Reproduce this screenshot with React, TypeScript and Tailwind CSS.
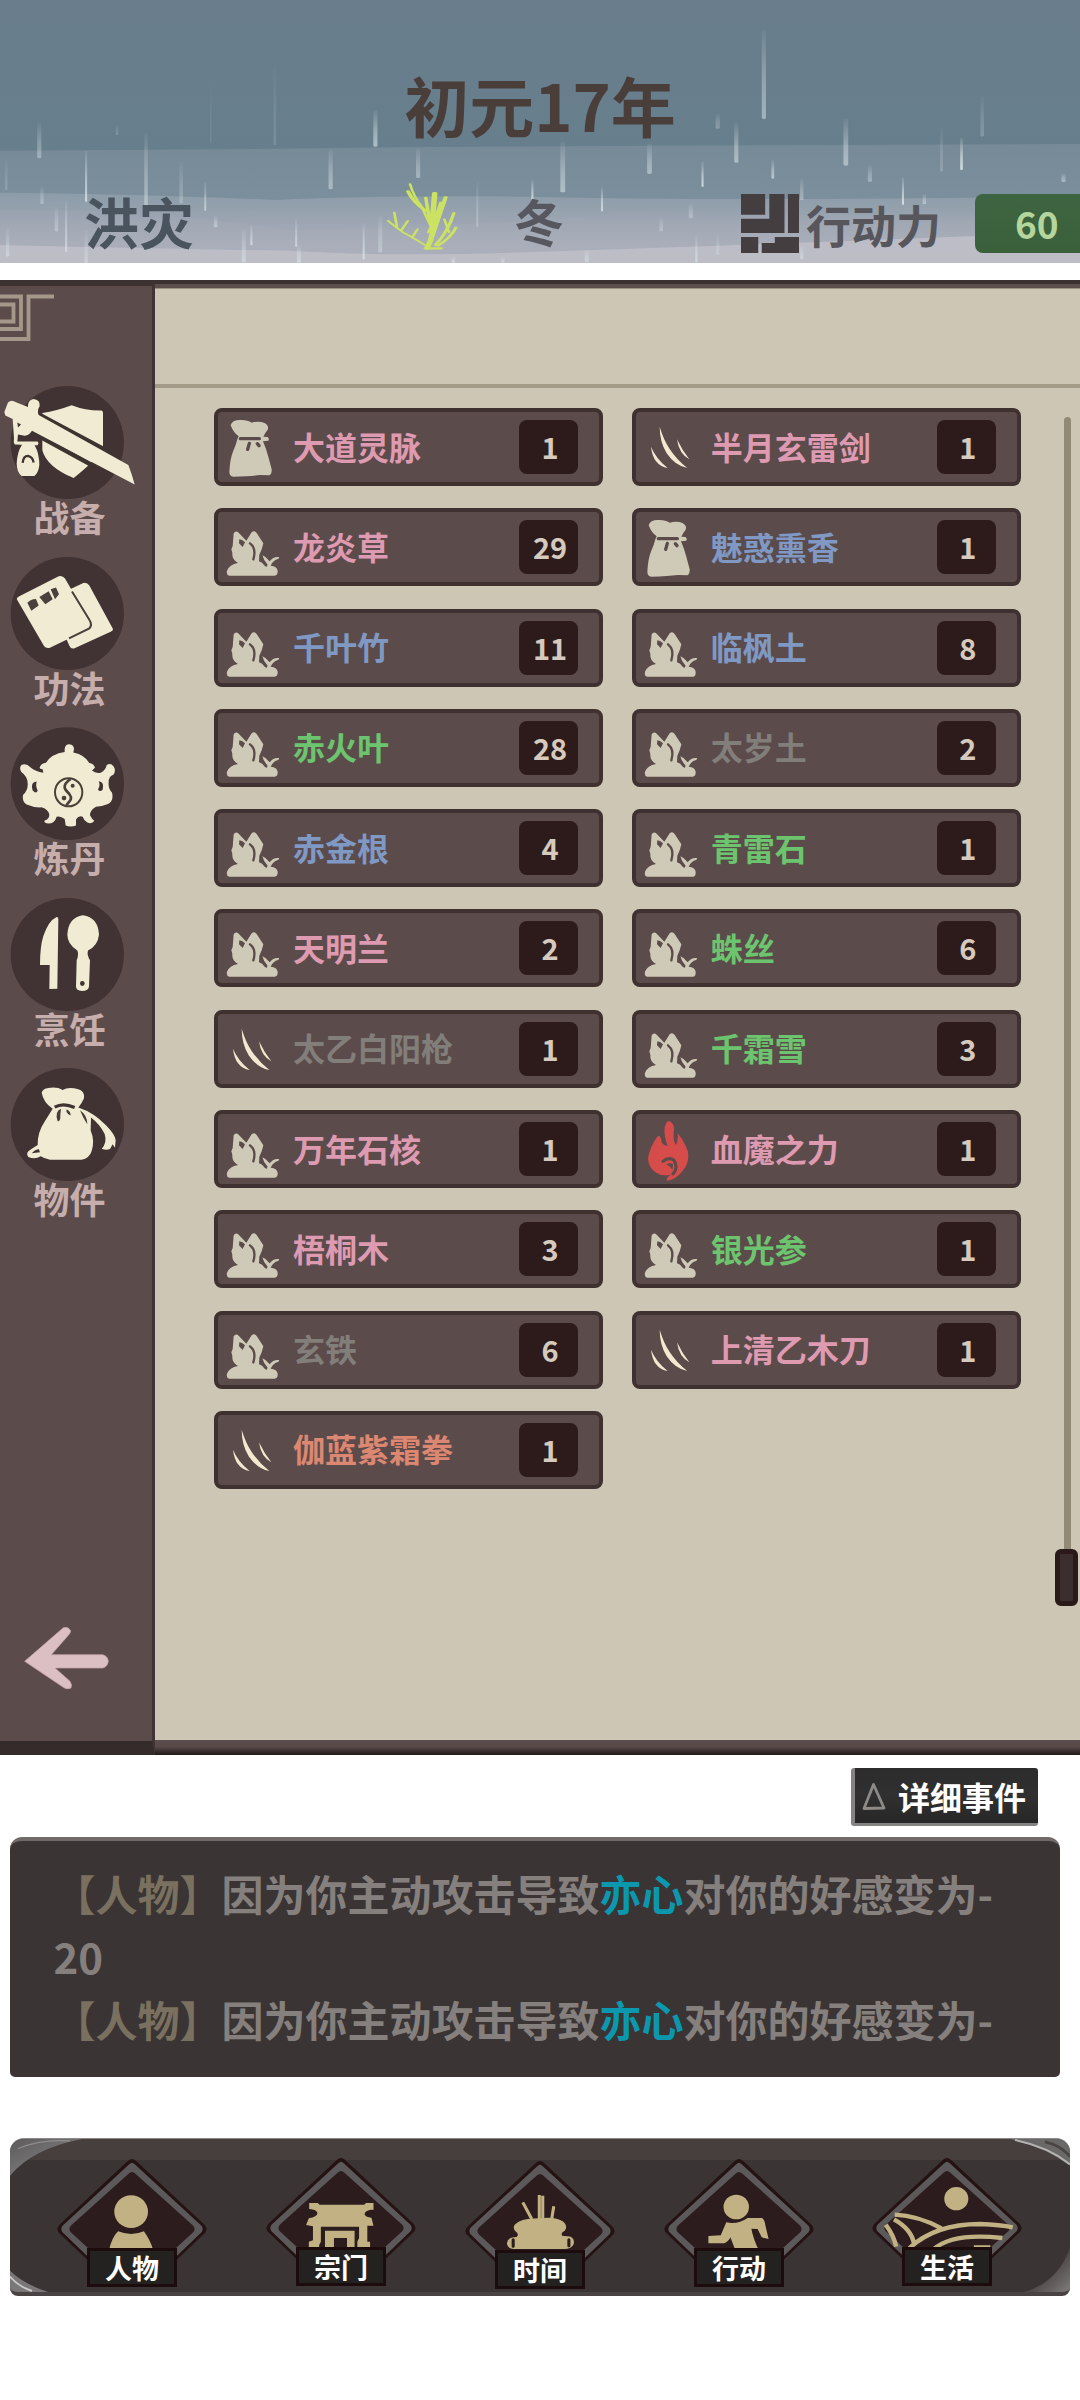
import React from "react";

type IconKind = "bag" | "herb" | "slash" | "flame";
type Item = { name: string; count: number; icon: IconKind; color: string };

const PINK = "text-[#de9ab0]";
const BLUE = "text-[#7f99c4]";
const GREEN = "text-[#6cc56e]";
const GRAY = "text-[#827e7a]";
const ORANGE = "text-[#dc8771]";

const items: Item[] = [
  { name: "大道灵脉", count: 1, icon: "bag", color: PINK },
  { name: "半月玄雷剑", count: 1, icon: "slash", color: PINK },
  { name: "龙炎草", count: 29, icon: "herb", color: PINK },
  { name: "魅惑熏香", count: 1, icon: "bag", color: BLUE },
  { name: "千叶竹", count: 11, icon: "herb", color: BLUE },
  { name: "临枫土", count: 8, icon: "herb", color: BLUE },
  { name: "赤火叶", count: 28, icon: "herb", color: GREEN },
  { name: "太岁土", count: 2, icon: "herb", color: GRAY },
  { name: "赤金根", count: 4, icon: "herb", color: BLUE },
  { name: "青雷石", count: 1, icon: "herb", color: GREEN },
  { name: "天明兰", count: 2, icon: "herb", color: PINK },
  { name: "蛛丝", count: 6, icon: "herb", color: GREEN },
  { name: "太乙白阳枪", count: 1, icon: "slash", color: GRAY },
  { name: "千霜雪", count: 3, icon: "herb", color: GREEN },
  { name: "万年石核", count: 1, icon: "herb", color: PINK },
  { name: "血魔之力", count: 1, icon: "flame", color: PINK },
  { name: "梧桐木", count: 3, icon: "herb", color: PINK },
  { name: "银光参", count: 1, icon: "herb", color: GREEN },
  { name: "玄铁", count: 6, icon: "herb", color: GRAY },
  { name: "上清乙木刀", count: 1, icon: "slash", color: PINK },
  { name: "伽蓝紫霜拳", count: 1, icon: "slash", color: ORANGE },
];

/* Rain streaks: x, top, bottom, width, opacity */
const rain: [number, number, number, number, number][] = [
  [57, 368, 475, 6, 0.4], [125, 452, 605, 3, 0.8], [125, 690, 789, 5, 0.4], [212, 400, 620, 5, 0.5],
  [263, 482, 610, 5, 0.3], [170, 375, 405, 4, 0.2], [298, 545, 632, 3, 0.6], [399, 200, 435, 4, 0.15],
  [545, 330, 440, 6, 0.6], [480, 448, 568, 6, 0.5], [607, 445, 534, 6, 0.45], [817, 425, 577, 7, 0.55],
  [943, 430, 522, 7, 0.5], [773, 540, 598, 3, 0.8], [693, 545, 680, 3, 0.35], [874, 562, 634, 3, 0.8],
  [1020, 484, 560, 3, 0.85], [1042, 340, 386, 6, 0.3], [1069, 368, 488, 6, 0.55], [1109, 90, 357, 6, 0.5],
  [1122, 480, 536, 4, 0.65], [1164, 535, 600, 5, 0.4], [1228, 355, 497, 7, 0.55], [1263, 495, 546, 6, 0.4],
  [1311, 532, 614, 3, 0.85], [1342, 582, 612, 5, 0.5], [1367, 380, 515, 4, 0.25], [1396, 414, 510, 4, 0.85],
  [1426, 290, 410, 5, 0.25], [1544, 520, 546, 6, 0.5], [61, 560, 612, 5, 0.35], [82, 620, 695, 5, 0.4],
  [96, 600, 755, 3, 0.65], [11, 685, 770, 5, 0.45], [9, 480, 570, 4, 0.2], [313, 648, 682, 5, 0.5],
  [354, 685, 787, 6, 0.5], [365, 676, 735, 3, 0.75], [430, 655, 740, 3, 0.65], [434, 735, 788, 6, 0.55],
  [528, 670, 778, 3, 0.75], [552, 645, 757, 6, 0.4], [658, 770, 788, 5, 0.6], [730, 772, 788, 5, 0.5],
  [852, 748, 786, 6, 0.5], [960, 655, 694, 5, 0.4], [1003, 610, 655, 6, 0.35], [1011, 704, 787, 3, 0.65],
  [1042, 705, 765, 4, 0.35], [1164, 735, 778, 5, 0.5], [306, 250, 430, 2, 0.12],
];

function Sky() {
  return (
    <svg className="absolute inset-0 h-full w-full" viewBox="0 0 1568 789" preserveAspectRatio="none" aria-hidden>
      <defs>
        <linearGradient id="top" x1="0" y1="0" x2="0" y2="1">
          <stop offset="0" stopColor="#697d8c" />
          <stop offset="1" stopColor="#677f8c" />
        </linearGradient>
        <linearGradient id="mid" x1="0" y1="0" x2="0" y2="1">
          <stop offset="0" stopColor="#778a98" />
          <stop offset="1" stopColor="#8194a0" />
        </linearGradient>
        <linearGradient id="low" x1="0" y1="0" x2="0" y2="1">
          <stop offset="0" stopColor="#8b9ca8" />
          <stop offset="0.4" stopColor="#9ba5b1" />
          <stop offset="1" stopColor="#b3b5c0" />
        </linearGradient>
        <linearGradient id="haze" x1="0" y1="0" x2="0" y2="1">
          <stop offset="0" stopColor="#a9adb9" stopOpacity="0.1" />
          <stop offset="1" stopColor="#a9adb9" stopOpacity="0.7" />
        </linearGradient>
        <linearGradient id="drop" x1="0" y1="0" x2="0" y2="1">
          <stop offset="0" stopColor="#d6e2e6" stopOpacity="0.1" />
          <stop offset="0.55" stopColor="#d6e2e6" stopOpacity="0.75" />
          <stop offset="1" stopColor="#dde8ea" />
        </linearGradient>
      </defs>
      <rect width="1568" height="460" fill="url(#top)" />
      <path d="M0 452 Q250 450 500 444 T1568 432 V789 H0Z" fill="url(#mid)" />
      <path d="M0 578 Q180 580 400 600 Q560 585 760 590 Q1100 605 1568 588 V789 H0Z" fill="url(#low)" />
      <path d="M0 630 Q220 625 420 690 Q700 680 900 640 Q1200 650 1568 640 V789 H0Z" fill="url(#haze)" />
      <path d="M0 735 Q200 745 420 752 Q560 770 740 758 Q1100 735 1568 695 V789 H0Z" fill="#bfc0c8" opacity="0.85" />
      {rain.map(([x, a, b, w, o]) => (
        <rect key={`${x}-${a}`} x={x - w / 2} y={a} width={w} height={b - a} rx={w / 2} fill="url(#drop)" opacity={o} />
      ))}
    </svg>
  );
}

function Twig() {
  return (
    <svg className="h-[68px] w-[72px]" viewBox="560 538 105 205" preserveAspectRatio="none" fill="none" stroke="#cce262" strokeLinecap="round" aria-hidden>
      <path d="M620 738 Q632 690 628 640 Q630 600 631 572" strokeWidth="8" />
      <path d="M595 544 Q600 580 612 612 Q620 650 630 690" strokeWidth="4" />
      <path d="M592 566 Q600 600 618 625" strokeWidth="6" />
      <path d="M647 584 Q638 640 628 700" strokeWidth="6" />
      <path d="M640 600 Q632 650 622 690 M618 585 Q622 640 626 670" strokeWidth="5" />
      <path d="M659 632 Q650 690 632 728 M662 675 Q655 705 636 730" strokeWidth="5" />
      <path d="M572 630 L576 672 M563 655 Q575 675 585 690 Q600 705 622 735" strokeWidth="4" />
      <path d="M592 655 L582 684 M606 680 L598 706 M645 650 L652 690" strokeWidth="4" />
      <path d="M618 738 H640" strokeWidth="7" />
    </svg>
  );
}

function EnergyIcon() {
  return (
    <svg className="h-[59px] w-[58px] shrink-0" viewBox="1076 582 84 177" preserveAspectRatio="none" fill="#453e41" aria-hidden>
      <path d="M1076 582h35v62h-35zM1117 582h22v117h-63v-43h41zM1144 582h16v117h-16zM1076 711h25v48h-25zM1106 759v-30h19v-18h35v48z" />
    </svg>
  );
}

const CREAM = "#f0ebd2";
const DARK = "#413233";

function SideIcon({ kind }: { kind: string }) {
  const early = kind === "gear" || kind === "books";
  const views: Record<string, string> = {
    gear: "0 347 459 340",
    books: "0 858 459 340",
    alchemy: "0 77 459 329",
    cooking: "0 574 459 329",
    goods: "0 1068 459 329",
  };
  const cy: Record<string, number> = { gear: 517, books: 1028, alchemy: 242, cooking: 738.5, goods: 1232.5 };
  return (
    <svg className="block h-[113px] w-[153px]" viewBox={views[kind]} preserveAspectRatio="none" aria-hidden>
      <ellipse cx="202" cy={cy[kind]} rx="170" ry={early ? 170 : 164.5} fill={DARK} />
      {kind === "gear" && (
        <g fill={CREAM}>
          <path d="M127 428 Q170 422 215 405 Q258 422 305 421 Q310 424 309 430 V532 Q300 560 221 624 Q140 590 127 540Z" />
          <path d="M122 436 L330 547 M92 484 L285 590" stroke="#3d3330" strokeWidth="14" />
          <path d="M13 425 L24 397 Q34 386 48 396 L84 410 Q82 390 100 386 Q122 389 119 408 Q110 420 116 434 L385 585 Q395 610 404 643 L96 482 Q84 500 70 496 L54 493 L52 514 H113 Q118 519 113 525 H104 Q118 550 118 585 Q115 610 103 618 H65 Q50 605 50 580 Q52 545 66 524 L45 523 Q40 520 42 505 L38 446 L16 436Z" />
          <path d="M52 457 L63 463 L54 472Z" fill={DARK} />
          <path d="M68 578 Q70 557 84 557 Q98 560 101 577" fill="none" stroke={DARK} strokeWidth="7" />
        </g>
      )}
      {kind === "books" && (
        <g fill={CREAM}>
          <path d="M210 955 L250 936 Q262 934 268 944 L339 1075 Q340 1080 332 1083 L222 1133 Q212 1135 208 1125 L195 1095Z" />
          <path d="M50 984 Q52 978 58 976 L176 916 Q188 913 195 923 L271 1054 Q276 1068 266 1075 L150 1131 Q138 1134 132 1126Z" />
          <path d="M216 962 L268 1047 Q278 1062 268 1073 L207 1103" fill="none" stroke="#49403b" strokeWidth="6" />
          <path d="M82 996 Q92 984 108 984 L116 1004 L94 1020Z M118 978 L146 961 L158 985 L136 1000Z M152 955 L168 950 L177 970 L165 985Z" fill="#49403b" />
        </g>
      )}
      {kind === "alchemy" && (
        <g fill={CREAM}>
          <path d="M194 140 Q196 127 208 127 Q222 129 222 141 L220 151 Q255 158 268 182 Q282 184 285 196 L276 204 Q288 214 302 210 Q318 203 320 188 Q332 180 341 192 Q349 204 340 216 Q326 220 326 238 Q324 256 336 268 Q342 292 324 301 Q305 308 288 309 Q270 318 270 334 Q276 346 283 350 Q276 361 262 355 Q252 350 248 338 Q236 334 228 346 L228 364 Q212 370 197 364 L194 345 Q182 335 170 338 Q164 358 145 358 Q132 357 133 350 Q148 346 148 332 Q144 316 124 311 Q100 312 80 303 Q66 294 69 275 Q84 262 83 243 Q84 222 64 208 Q56 196 65 187 Q80 182 91 194 Q106 206 130 210 L128 200 Q118 200 119 194 Q124 182 138 181 Q155 155 194 150Z" />
          <path d="M110 236 Q90 238 98 262 Q110 273 113 262 Q106 250 110 236ZM296 235 Q314 237 308 260 Q298 268 294 258 Q302 247 296 235Z" fill={DARK} />
          <circle cx="206" cy="267" r="41" fill="none" stroke="#4a4039" strokeWidth="6" />
          <path d="M212 228 C180 250 198 262 208 272 C222 290 202 296 200 305" fill="none" stroke="#4a4039" strokeWidth="8" />
          <circle cx="218" cy="248" r="6" fill="#4a4039" />
          <circle cx="192" cy="284" r="7" fill="#4a4039" />
        </g>
      )}
      {kind === "cooking" && (
        <g fill={CREAM}>
          <path d="M170 629 Q175 629 175 636 L172 838 L148 839 L149 769 H120 Q120 715 130 685 Q145 640 170 629Z" />
          <path d="M249 624 Q294 630 297 680 Q294 712 264 727 Q260 740 270 755 L267 832 Q266 845 246 845 Q228 844 228 832 L230 755 Q237 740 232 727 Q202 708 202 680 Q205 630 249 624Z" />
          <circle cx="247" cy="823" r="7" fill={DARK} />
        </g>
      )}
      {kind === "goods" && (
        <g fill={CREAM}>
          <path d="M125 1140 Q128 1128 145 1126 Q172 1122 188 1132 Q205 1122 235 1130 Q255 1136 252 1156 Q245 1172 235 1183 Q282 1198 318 1235 Q345 1262 347 1278 L345 1300 L338 1290 L330 1304 Q318 1308 305 1303 Q322 1285 314 1260 Q300 1232 273 1212 L272 1250 Q285 1280 275 1310 Q268 1332 245 1335 H150 Q135 1333 122 1325 Q105 1335 85 1327 Q75 1315 92 1305 L113 1292 Q112 1255 135 1222 L158 1187 Q130 1168 125 1140Z" />
          <path d="M164 1182 Q190 1168 224 1183" fill="none" stroke={DARK} strokeWidth="9" />
          <path d="M183 1187 Q163 1195 173 1223 Q182 1225 181 1205Z M200 1188 Q196 1200 212 1206 Q212 1194 200 1188Z M240 1191 Q262 1205 262 1232 Q250 1215 240 1191Z" fill="#4a3d39" />
          <path d="M95 1316 Q105 1305 116 1304 L120 1313Z" fill={DARK} />
        </g>
      )}
    </svg>
  );
}

function ItemIcon({ kind }: { kind: IconKind }) {
  const hole = "#5c4b4b";
  const views: Record<IconKind, string> = {
    bag: "54 66 228 210",
    herb: "54 366 228 210",
    slash: "47 66 228 210",
    flame: "47 102 228 210",
  };
  return (
    <svg className="h-[70px] w-[76px] shrink-0" viewBox={views[kind]} aria-hidden>
      {kind === "bag" && (
        <g>
          <path fill="#cfcab7" d="M92 106 Q96 90 120 90 Q142 89 155 98 Q175 92 192 98 Q208 106 203 119 Q194 130 190 140 L203 141 Q209 147 205 152 L189 154 Q198 175 205 200 L215 238 Q216 252 208 256 L180 255 Q150 259 100 260 Q88 258 88 245 Q90 205 100 182 Q108 165 112 148 L116 139 Q100 128 92 106Z" />
          <path d="M121 146 H178" stroke={hole} strokeWidth="10" strokeLinecap="round" />
          <path d="M148 160 L143 178 M172 161 L177 167" stroke={hole} strokeWidth="10" strokeLinecap="round" />
        </g>
      )}
      {kind === "herb" && (
        <g>
          <path fill="#cfcab7" d="M101 430 Q107 420 116 428 L139 452 L155 427 Q163 419 170 429 L190 460 Q186 480 178 494 L177 514 Q190 518 196 528 L203 524 Q190 510 187 496 Q199 500 209 514 Q220 499 236 501 Q240 504 234 507 Q220 510 212 527 Q231 528 233 542 Q234 557 224 557 H88 Q78 555 81 542 Q88 524 114 519 Q95 508 97 488 L94 478 L98 468Z" />
          <path fill={hole} d="M118 448 Q126 448 135 457 L128 471 L117 460Z" />
          <path d="M150 460 Q170 475 160 508" fill="none" stroke={hole} strokeWidth="7" strokeLinecap="round" />
          <path d="M184 501 Q187 518 199 527" fill="none" stroke={hole} strokeWidth="6" strokeLinecap="round" />
        </g>
      )}
      {kind === "slash" && (
        <path fill="#f3e9d0" d="M118 110 Q130 150 148 177 Q170 210 201 234 Q165 228 139 190 Q118 155 118 110ZM92 170 Q106 205 142 234 Q98 226 92 170ZM170 148 Q186 182 207 208 Q176 192 170 148Z" />
      )}
      {kind === "flame" && (
        <g>
          <path fill="#d54c4a" d="M145 123 Q160 126 161 147 Q157 180 166 195 Q174 185 172 160 Q192 185 203 215 Q208 250 187 272 Q168 298 140 302 Q135 295 152 284 Q125 290 108 278 Q85 265 83 236 Q88 200 113 167 Q121 168 122 178 Q124 196 142 198 Q130 168 133 142 Q138 124 145 123Z" />
          <path d="M128 244 Q145 230 160 240 Q176 262 158 282" fill="none" stroke={hole} strokeWidth="9" strokeLinecap="round" />
          <path d="M158 252 Q146 246 137 254 Q150 256 156 270Z" fill={hole} />
        </g>
      )}
    </svg>
  );
}

const KHAKI = "#c2b283";

const navArt: Record<string, React.ReactNode> = {
  人物: (
    <g transform="translate(-383.5 -115)">
      <circle cx="381" cy="273" r="49" />
      <path d="M316 390 Q325 350 343 332 Q382 348 418 332 Q435 355 446 390Z" />
    </g>
  ),
  宗门: (
    <g transform="translate(-990.5 -112)">
      <path d="M898 247h25l5 5h130l5-5h22v20h-8q-18 3-18 14 4 10 20 10l6 24h-18v48h8v30h-38v-30l6-10v-35H932v45l-5 10v20h-30v-30l12-4v-42l-20-4 8-20q24-4 25-15-2-10-18-12l-6-1z" />
      <path d="M940 390v-62h94v62" fill="none" stroke="#2b1c1d" strokeWidth="8" />
      <path d="M944 390v-60h86v60h-22v-38h-38v38z" />
    </g>
  ),
  时间: (
    <g transform="translate(0 -126)">
      <path d="M-50 250 L-24 300 M-2 228 V300 M8 230 V300 M40 262 L34 300" stroke={KHAKI} strokeWidth="9" fill="none" />
      <path d="M-62 308 Q-40 298 0 298 Q45 292 68 308 Q82 320 72 335 Q60 340 64 350 L78 352 Q102 352 98 375 Q92 390 70 390 H-70 Q-96 390 -96 372 Q-94 354 -68 354 Q-60 345 -70 338 Q-86 322 -62 308Z" />
      <path d="M-78 362v20M84 362v18" stroke="#2b1c1d" strokeWidth="9" strokeLinecap="round" />
    </g>
  ),
  行动: (
    <g transform="translate(-578 -115)">
      <circle cx="570" cy="259" r="37" />
      <path d="M541 305 Q575 312 603 292 H645 Q652 296 655 315 L664 355 L644 350 L632 325 L614 324 Q618 350 636 390 H568 L553 350 Q548 362 535 368 L489 368 V346 L525 344Z" />
    </g>
  ),
  生活: (
    <g transform="translate(-1184 -112)">
      <circle cx="1211" cy="234" r="35" />
      <path d="M1032 282 Q1100 285 1168 323 M1030 296 Q1080 325 1088 368 M1006 312 Q1030 345 1036 378 M1075 382 Q1150 310 1280 310 Q1340 312 1375 320 M1145 386 Q1200 335 1345 352 M1262 380 H1310" fill="none" stroke={KHAKI} strokeWidth="13" />
    </g>
  ),
};

const nav = [
  { label: "人物", place: "ml-[47px] mt-[20px]" },
  { label: "宗门", place: "ml-[59px] mt-[19px]" },
  { label: "时间", place: "ml-[49px] mt-[22px]" },
  { label: "行动", place: "ml-[49px] mt-[20px]" },
  { label: "生活", place: "ml-[58px] mt-[19px]" },
];

function NavItem({ label, place }: { label: string; place: string }) {
  return (
    <button className={`relative flex w-[150px] flex-col items-center ${place}`}>
      <svg className="block h-[112px] w-[150px]" viewBox="-218 0 436 336" preserveAspectRatio="none" aria-hidden>
        <path d="M-12 6 Q0 -6 12 6 L208 194 Q226 210 208 226 L0 430 L-208 226 Q-226 210 -208 194Z" fill="#251314" />
        <path d="M-8 16 Q0 7 8 16 L202 200 Q209 210 202 220 L0 420 L-202 220 Q-209 210 -202 200Z" fill="#5b5959" />
        <path d="M-10 44 Q0 34 10 44 L178 200 Q186 210 178 220 L0 388 L-178 220 Q-186 210 -178 200Z" fill="#2c1c1e" />
        <g fill={KHAKI}>{navArt[label]}</g>
      </svg>
      <span className="relative -mt-[23px] flex h-[39px] w-[90px] items-center justify-center border-[3px] border-[#1d0c0d] bg-[#242220] pt-[1px] text-[27px] leading-[32px] font-bold text-white">
        {label}
      </span>
    </button>
  );
}

const side = [
  { kind: "gear", label: "战备" },
  { kind: "books", label: "功法" },
  { kind: "alchemy", label: "炼丹" },
  { kind: "cooking", label: "烹饪" },
  { kind: "goods", label: "物件" },
];

function LogLine() {
  return (
    <p className="whitespace-nowrap">
      <span className="text-[#79705f]">【人物】</span>因为你主动攻击导致<span className="text-[#0b98ae]">亦心</span>对你的好感变为-
    </p>
  );
}

export default function App() {
  return (
    <div className="flex h-[2400px] w-[1080px] flex-col overflow-hidden bg-white font-['Noto_Sans_CJK_SC',sans-serif] font-bold">
      <header className="relative h-[263px] overflow-hidden">
        <Sky />
        <div className="relative flex h-full flex-col">
          <h1 className="mt-[69px] text-center text-[65px] leading-[70px] text-[#4a3e3b]">初元17年</h1>
          <div className="mt-[49px] flex h-[70px] items-center">
            <span className="-mt-[6px] ml-[84px] w-[302px] shrink-0 text-[55px] leading-[60px] text-[#4a545f]">洪灾</span>
            <span className="-mt-[14px] shrink-0"><Twig /></span>
            <span className="-mt-[6px] ml-[56px] w-[227px] shrink-0 text-[50px] leading-[60px] text-[#57575f]">冬</span>
            <EnergyIcon />
            <span className="mt-[4px] ml-[7px] w-[169px] shrink-0 text-[45px] leading-[54px] text-[#57565c]">行动力</span>
            <span className="flex h-[59px] w-[120px] shrink-0 items-center rounded-lg bg-gradient-to-b from-[#3e6541] to-[#396039] pl-[40px] text-[37px] leading-[50px] text-[#b4d59b]">60</span>
          </div>
        </div>
      </header>

      <main className="mt-[17px] flex h-[1475px] bg-[#cdc6b4]">
        <aside className="flex w-[155px] shrink-0 flex-col border-t-[6px] border-r-[3px] border-b-[14px] border-t-[#3a3130] border-r-[#403534] border-b-[#352b2b] bg-[#5c4b4b]">
          <svg className="block h-[56px] w-[60px]" viewBox="0 16 60 56" fill="none" stroke="#a3988a" strokeWidth="3.8" aria-hidden>
            <path d="M0 34.5 H13.5 V51.5 H0 M0 26.5 H21 V59 H0 M54 26.5 H28.5 V69 H0" />
          </svg>
          <nav className="mt-[44px] flex flex-col gap-[19.5px]">
            {side.map((s) => (
              <button key={s.kind} className="block w-[152px] text-left">
                <SideIcon kind={s.kind} />
                <span className="block h-[38px] w-[139px] text-center text-[36px] leading-[34px] text-[#c6aead]">{s.label}</span>
              </button>
            ))}
          </nav>
          <svg className="mt-auto mb-[48px] ml-[20px] h-[70px] w-[96px]" viewBox="60 185 288 210" aria-hidden>
            <path d="M74 300 L190 199 Q204 195 212 208 Q212 215 205 222 L154 280 H308 Q324 285 325 300 Q322 317 308 320 H165 L210 360 Q217 370 213 380 Q200 386 190 378Z" fill="#dcbfc2" stroke="#c5a8aa" strokeWidth="2" />
          </svg>
        </aside>

        <section className="flex grow flex-col border-t-[4px] border-[#3a3130]">
          <div className="h-[4px] bg-[#5d4d4b]" />
          <div className="h-[100px] border-t-[1px] border-b-[4px] border-t-[#9a9181] border-b-[#a39b87]" />
          <div className="flex grow">
            <div className="grid grid-cols-[389px_389px] content-start gap-x-[28.7px] gap-y-[22.3px] pt-[20px] pl-[59px]">
              {items.map((it) => (
                <div key={it.name} className="flex h-[78px] items-center rounded-[8px] border-[4px] border-[#3e312f] bg-[#5c4b4b]">
                  <ItemIcon kind={it.icon} />
                  <span className={`-mt-[3px] -ml-px grow text-[32px] leading-[40px] ${it.color}`}>{it.name}</span>
                  <span className="mr-[21px] flex h-[54px] w-[59px] items-center justify-center rounded-lg bg-[#2d1b1c] pb-[2px] pl-[3px] text-[29px] leading-[40px] text-[#d5cabd]">
                    {it.count}
                  </span>
                </div>
              ))}
            </div>
            <div className="ml-[34px] flex w-[23px] flex-col items-center pt-[29px]">
              <div className="ml-[2px] h-[1132px] w-[7px] rounded-t-full bg-[#928a76]" />
              <div className="h-[57px] w-[23px] rounded-[6px] border-[5px] border-[#2c1a1b] bg-[#3a2e2f]" />
            </div>
          </div>
          <div className="h-[15px] bg-gradient-to-b from-[#5c4c4b] via-[#584948] via-45% to-[#211a1b]" />
        </section>
      </main>

      <div className="mt-[13px] flex h-[58px] justify-end pr-[42px]">
        <button className="flex h-[58px] w-[187px] items-center rounded-[3px] border-b-[3px] border-l-[4px] border-[#858282] bg-gradient-to-b from-[#2c2c2c] via-[#303030] to-[#272727]">
          <svg className="ml-[5px] h-[29px] w-[27px]" viewBox="0 0 27 29" fill="none" stroke="#8d8a88" strokeWidth="2.8" strokeLinejoin="round" aria-hidden>
            <path d="M13.5 3.5 L24 27 L4 27.5Z" />
          </svg>
          <span className="ml-[11px] text-[32px] leading-[40px] text-white">详细事件</span>
        </button>
      </div>

      <section className="mt-[11px] ml-[10px] h-[240px] w-[1050px] rounded-t-[12px] rounded-b-[5px] border-t-[4px] border-[#716a6a] bg-[#3b3434] pt-[20px] pl-[43.5px] text-[42px] leading-[63px] text-[#85807d]">
        <LogLine />
        <p>20</p>
        <LogLine />
      </section>

      <footer className="relative mt-[61px] ml-[10px] flex h-[158px] w-[1060px] items-start overflow-hidden rounded-t-[14px] rounded-b-[8px] border-t border-b-[4px] border-t-[#8c8888] border-b-[#4a4343] bg-gradient-to-b from-[#463f3e] from-[21px] to-[#3b3434] to-[21px]">
        <svg className="absolute inset-0 h-full w-full" viewBox="0 0 1060 158" preserveAspectRatio="none" aria-hidden>
          <defs>
            <linearGradient id="corner" x1="0" y1="0" x2="1" y2="1">
              <stop offset="0" stopColor="#5d5a5b" />
              <stop offset="1" stopColor="#8e8b8c" />
            </linearGradient>
            <linearGradient id="cornerRight" x1="0.4" y1="0.4" x2="1" y2="1">
              <stop offset="0" stopColor="#3f3838" />
              <stop offset="1" stopColor="#807c7c" />
            </linearGradient>
          </defs>
          <path d="M0 0 H72 Q22 10 0 38Z" fill="url(#corner)" />
          <path d="M8 10 Q30 0 60 2" fill="none" stroke="#a9a7a8" strokeWidth="1.2" opacity="0.6" />
          <path d="M0 136 Q14 150 38 158 H0Z" fill="#7b7778" />
          <path d="M0 142 Q8 152 22 157" fill="none" stroke="#c9c7c8" strokeWidth="2" />
          <path d="M1000 0 H1060 V28 Q1036 8 1000 0Z" fill="#6b6868" />
          <path d="M1005 1 Q1038 8 1060 26" fill="none" stroke="#b5b3b3" strokeWidth="2" />
          <path d="M1035 3 Q1050 6 1060 18" fill="none" stroke="#4a4646" strokeWidth="3" />
          <path d="M1060 112 V158 H1014 Q1048 148 1060 112Z" fill="url(#cornerRight)" />
        </svg>
        {nav.map((n) => (
          <NavItem key={n.label} {...n} />
        ))}
      </footer>
    </div>
  );
}
